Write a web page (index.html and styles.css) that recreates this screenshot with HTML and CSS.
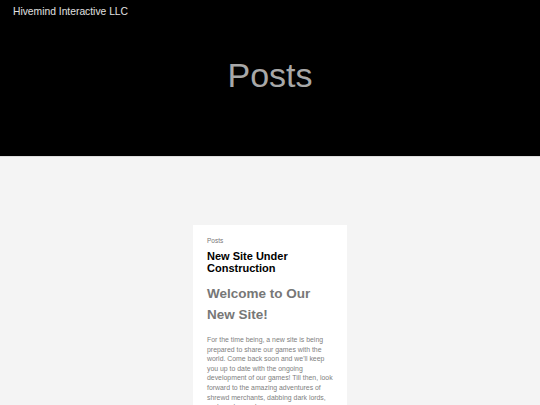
FILE: index.html
```html
<!DOCTYPE html>
<html>
<head>
<meta charset="utf-8">
<link rel="stylesheet" href="styles.css">
</head>
<body>
<header class="hero">
  <div class="site-name">Hivemind Interactive LLC</div>
  <h1 class="page-title">Posts</h1>
</header>
<main class="content">
  <article class="card">
    <div class="crumb">Posts</div>
    <h2 class="post-title">New Site Under Construction</h2>
    <h3 class="post-heading">Welcome to Our New Site!</h3>
    <p class="post-text">For the time being, a new site is being prepared to share our games with the world. Come back soon and we'll keep you up to date with the ongoing development of our games! Till then, look forward to the amazing adventures of shrewd merchants, dabbing dark lords, and much more!</p>
  </article>
</main>
</body>
</html>
```
FILE: styles.css
```css
html, body {
  margin: 0;
  padding: 0;
  font-family: "Liberation Sans", Arial, sans-serif;
  background: #f4f4f4;
}
.hero {
  background: #000;
  height: 157px;
  padding: 6px 13px 0;
  box-sizing: border-box;
  border-bottom: 1px solid #ddd;
}
.site-name {
  color: #e0e0e0;
  font-size: 10.3px;
  line-height: 12px;
}
.page-title {
  margin: 37px 0 0;
  text-align: center;
  color: #a8a8a8;
  font-weight: normal;
  font-size: 34px;
  line-height: 40px;
}
.content {
  display: flex;
  justify-content: center;
  padding-top: 68px;
}
.card {
  background: #fff;
  width: 154px;
  box-sizing: border-box;
  padding: 11px 14px 20px;
}
.crumb {
  font-size: 6.5px;
  color: #777;
  line-height: 10px;
}
.post-title {
  margin: 4px 0 0;
  font-size: 11px;
  line-height: 12px;
  color: #000;
  font-weight: bold;
}
.post-heading {
  margin: 9px 0 0;
  font-size: 13.5px;
  line-height: 21px;
  color: #777;
  font-weight: bold;
}
.post-text {
  margin: 10px 0 0;
  font-size: 6.9px;
  line-height: 9.6px;
  color: #808080;
}
```
